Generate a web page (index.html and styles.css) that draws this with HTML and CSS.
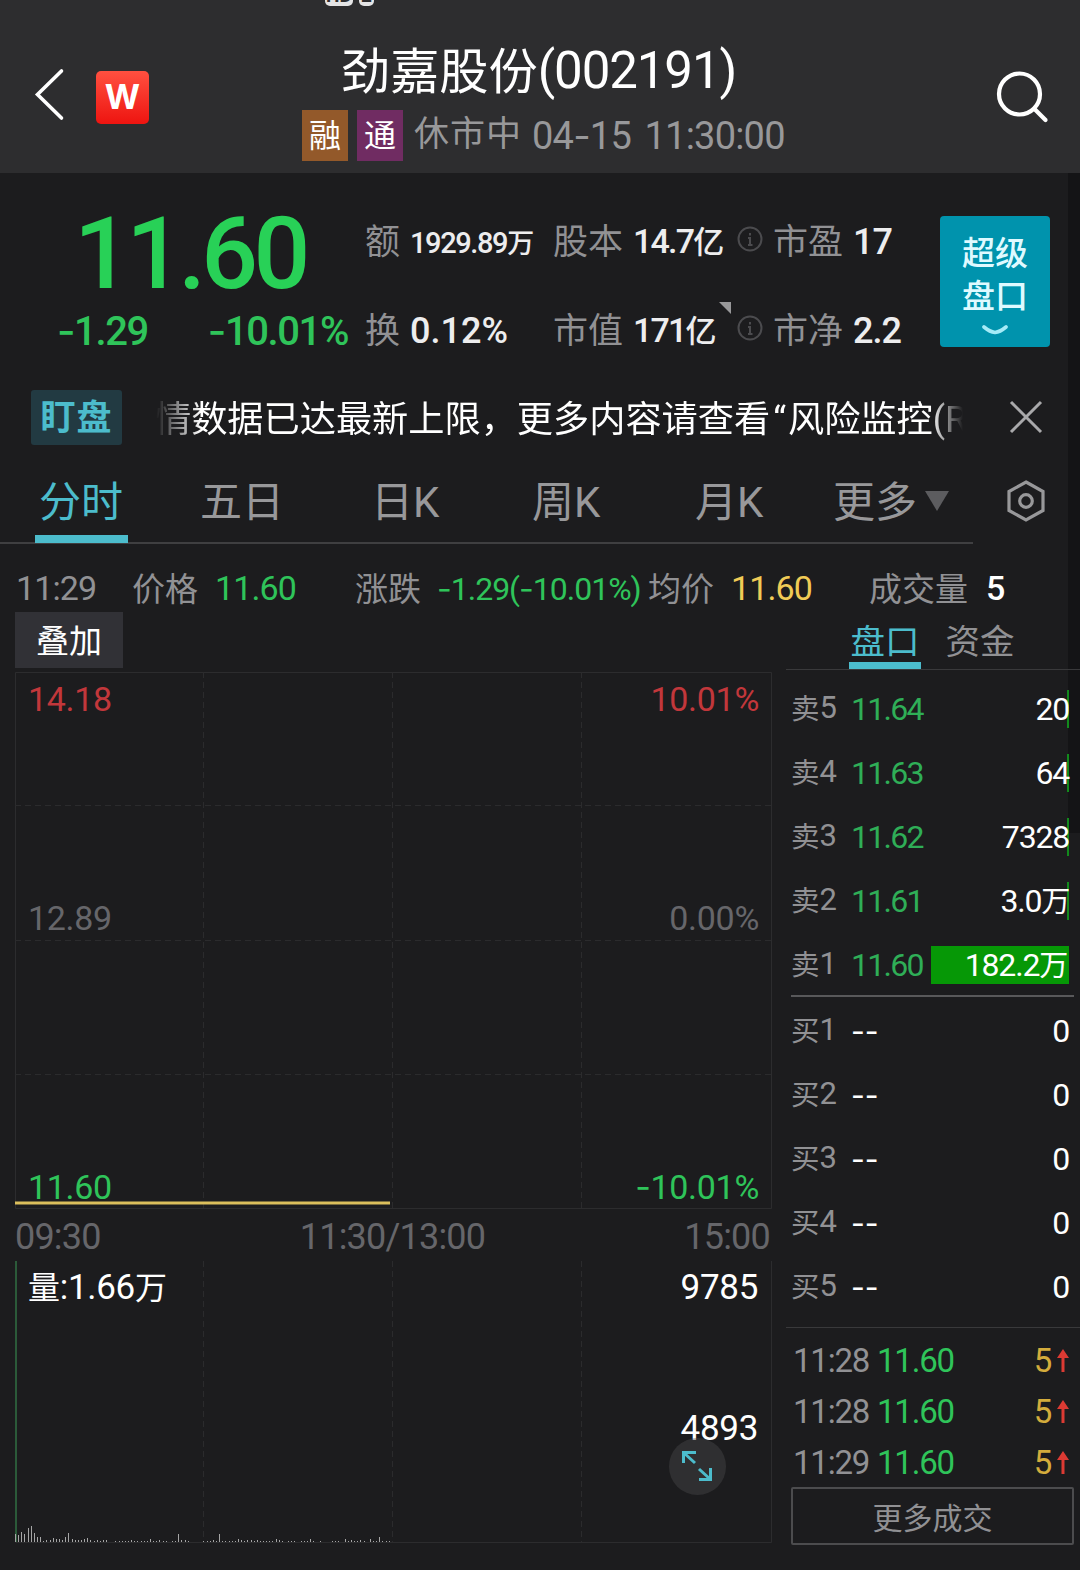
FILE: index.html
```html
<!DOCTYPE html>
<html lang="zh-CN">
<head>
  <meta charset="UTF-8">
  <meta name="viewport" content="width=device-width, initial-scale=1.0">
  <title>劲嘉股份(002191)</title>
  <link rel="stylesheet" href="styles.css">
</head>
<body>
  <!-- Header -->
  <header class="header">
    <div class="status"><span class="sim">HD</span><span class="sim sim-2">2</span></div>
    <div class="header-left">
      <svg class="back" width="32" height="56" viewBox="0 0 32 56"><path d="M27.500 5 L3.500 28.500 L27.500 52" /></svg>
      <div class="logo">W</div>
    </div>
    <div class="header-title">
      <h1><span>劲嘉股份</span><span class="code">(002191)</span></h1>
      <div class="sub">
        <span class="tag tag-rong">融</span>
        <span class="tag tag-tong">通</span>
        <span class="state">休市中</span>
        <span class="clock">04<i>-</i>15 11:30:00</span>
      </div>
    </div>
    <svg class="search" width="56" height="56" viewBox="0 0 56 56"><circle cx="23.500" cy="25" r="20.500" /><path d="M38.500 40 L49.500 51" /></svg>
  </header>

  <!-- Quote summary -->
  <section class="quote">
    <div class="price-box">
      <div class="price">11.60</div>
      <div class="change"><span><i>-</i>1.29</span><span><i>-</i>10.01%</span></div>
    </div>
    <div class="stats">
      <div class="stat"><label>额</label><b class="small">1929.89<em>万</em></b></div>
      <div class="stat"><label>股本</label><b class="mid">14.7<em>亿</em></b></div>
      <div class="stat info">
        <svg width="26" height="26" viewBox="0 0 26 26"><circle cx="13" cy="13" r="11.500" /><path d="M13 7v2.500M11 12h2v7M11 19h4.500" /></svg>
        <label>市盈</label><b>17</b>
      </div>
      <div class="stat"><label>换</label><b class="wide">0.12%</b></div>
      <div class="stat corner"><label>市值</label><b class="mid">171<em>亿</em></b></div>
      <div class="stat info">
        <svg width="26" height="26" viewBox="0 0 26 26"><circle cx="13" cy="13" r="11.500" /><path d="M13 7v2.500M11 12h2v7M11 19h4.500" /></svg>
        <label>市净</label><b>2.2</b>
      </div>
    </div>
    <button class="super">
      <span>超级</span><span>盘口</span>
      <svg width="26" height="12" viewBox="0 0 26 12"><path d="M2 3 Q8 8 13 8.500 Q18 8 24 3" /></svg>
    </button>
  </section>

  <!-- Notice -->
  <section class="notice">
    <span class="notice-tag">盯盘</span>
    <div class="notice-text"><p>情数据已达最新上限，更多内容请查看<q>“</q>风险监控<span>(R</span></p></div>
    <svg width="34" height="34" viewBox="0 0 34 34"><path d="M2 2 L32 32 M32 2 L2 32" /></svg>
  </section>

  <!-- Period tabs -->
  <nav class="tabs">
    <a class="active">分时</a>
    <a>五日</a>
    <a>日<span>K</span></a>
    <a>周<span>K</span></a>
    <a>月<span>K</span></a>
    <a>更多</a>
    <svg class="caret" width="24" height="20" viewBox="0 0 24 20"><path d="M0 0 H24 L12 20 Z" /></svg>
    <svg class="gear" width="40" height="44" viewBox="0 0 40 44"><path d="M20 3 L37 12.500 V31.500 L20 41 L3 31.500 V12.500 Z" /><circle cx="20" cy="22" r="6.300" /></svg>
  </nav>

  <section class="tick">
    <span class="n">11:29</span>
    <span>价格</span>
    <span class="n green">11.60</span>
    <span>涨跌</span>
    <span class="n green chg"><i>-</i>1.29(<i>-</i>10.01%)</span>
    <span>均价</span>
    <span class="n yellow">11.60</span>
    <span>成交量</span>
    <span class="n white">5</span>
  </section>

  <main class="main">
    <div class="charts">
      <button class="overlay-btn">叠加</button>

      <div class="plot price-plot">
        <svg width="757" height="537" viewBox="0 0 757 537">
          <path class="frame" d="M0.500 0.500 H756.500 V536.500 H0.500 Z" />
          <path class="grid" d="M188.500 0V536M377.500 0V536M566.500 0V536M0 133.500H756M0 268.500H756M0 402.500H756" />
          <path class="line" d="M0 531 H375" />
        </svg>
        <div class="scale">
          <div class="red"><span>14.18</span><span>10.01%</span></div>
          <div class="grey"><span>12.89</span><span>0.00%</span></div>
          <div class="green"><span>11.60</span><span><i>-</i>10.01%</span></div>
        </div>
      </div>

      <div class="times"><span>09:30</span><span>11:30/13:00</span><span>15:00</span></div>

      <div class="plot volume-plot">
        <svg width="757" height="282" viewBox="0 0 757 282">
          <path class="frame" d="M756.500 0 V281.500 H0.500" />
          <path class="grid" d="M188.500 0V281M377.500 0V281M566.500 0V281" />
          <path class="first" d="M0.500 0 V281" />
          <path class="bars" id="bars" d="" />
        </svg>
        <div class="vol-labels">
          <div><span><em>量</em>:1.66<em>万</em></span><span>9785</span></div>
          <div><span></span><span>4893</span></div>
        </div>
        <div class="expand">
          <svg width="32" height="32" viewBox="0 0 32 32"><path d="M2.500 13 V2.500 H15 M3 3 L14 13 M29.500 18 V29.500 H18 M29 29 L18 19" /></svg>
        </div>
      </div>
    </div>

    <aside class="book">
      <div class="book-tabs"><a class="active">盘口</a><a>资金</a></div>
      <div class="levels sell">
        <div class="level"><label><em>卖</em>5</label><b>11.64</b><u class="edge">20</u></div>
        <div class="level"><label><em>卖</em>4</label><b>11.63</b><u class="edge">64</u></div>
        <div class="level"><label><em>卖</em>3</label><b>11.62</b><u class="edge">7328</u></div>
        <div class="level"><label><em>卖</em>2</label><b>11.61</b><u class="edge">3.0<em>万</em></u></div>
        <div class="level"><label><em>卖</em>1</label><b>11.60</b><u class="full">182.2<em>万</em></u></div>
      </div>
      <div class="levels buy">
        <div class="level"><label><em>买</em>1</label><b>--</b><u>0</u></div>
        <div class="level"><label><em>买</em>2</label><b>--</b><u>0</u></div>
        <div class="level"><label><em>买</em>3</label><b>--</b><u>0</u></div>
        <div class="level"><label><em>买</em>4</label><b>--</b><u>0</u></div>
        <div class="level"><label><em>买</em>5</label><b>--</b><u>0</u></div>
      </div>
      <div class="trades">
        <div class="trade"><span>11:28</span><b>11.60</b><u>5</u><svg width="12" height="24" viewBox="0 0 12 24"><path d="M6 0 L12 9 H7.500 V23 H4.500 V9 H0 Z" /></svg></div>
        <div class="trade"><span>11:28</span><b>11.60</b><u>5</u><svg width="12" height="24" viewBox="0 0 12 24"><path d="M6 0 L12 9 H7.500 V23 H4.500 V9 H0 Z" /></svg></div>
        <div class="trade"><span>11:29</span><b>11.60</b><u>5</u><svg width="12" height="24" viewBox="0 0 12 24"><path d="M6 0 L12 9 H7.500 V23 H4.500 V9 H0 Z" /></svg></div>
      </div>
      <button class="more">更多成交</button>
    </aside>
  </main>

  <script>
    // volume per minute for the morning session, in pixels
    const volumes = [
      8, 7, 10, 8, 14, 16, 9, 5, 5, 1, 2, 2, 4, 3, 3, 2, 5, 9, 3, 2,
      2, 2, 3, 4, 2, 1, 2, 1, 2, 2, 0, 0, 1, 1, 1, 1, 1, 2, 1, 1,
      1, 1, 1, 3, 1, 1, 2, 1, 1, 0, 1, 1, 8, 2, 2, 1, 0, 0, 0, 0,
      1, 1, 1, 2, 1, 8, 1, 1, 1, 1, 1, 3, 2, 1, 2, 2, 1, 2, 1, 1,
      1, 1, 1, 3, 2, 1, 0, 1, 1, 1, 0, 1, 1, 1, 3, 1, 0, 1, 0, 0,
      0, 1, 1, 1, 0, 3, 1, 2, 1, 1, 2, 1, 0, 3, 1, 1, 5, 1, 1, 1
    ];
    document.getElementById('bars').setAttribute('d',
      volumes.map((v, i) => `M${(0.5 + Math.round(i * 3.14))} 281v-${v}`).join(''));
  </script>
</body>
</html>
```
FILE: styles.css
```css
* {
  box-sizing: border-box;
}

body {
  margin: 0;
  width: 1080px;
  height: 1570px;
  overflow: hidden;
  background: linear-gradient(#141416, #141416) 1068px 173px / 12px 660px no-repeat #1c1c1e;
  font-family: Roboto, "Noto Sans CJK SC", sans-serif;
  color: #fff;
}

svg {
  display: block;
  fill: none;
  flex: none;
}

i, em {
  font-style: normal;
}

/* the wider hyphen used in negative numbers */
i {
  font-family: Inter, sans-serif;
}

u {
  text-decoration: none;
}

b {
  font-weight: 400;
}

button {
  border: none;
  padding: 0;
  color: #fff;
  font-family: inherit;
}

.green { color: #2fc45a; }
.red { color: #c2373b; }
.yellow { color: #f0cb56; }
.grey { color: #66666a; }

/* Header */
.header {
  position: relative;
  display: grid;
  grid-template-columns: 302px 1fr 84px;
  height: 173px;
  background: #2d2d2f;
}

.status {
  position: absolute;
  top: 0;
  left: 325px;
  display: flex;
  gap: 6px;
  height: 6px;
  overflow: hidden;
}

.sim {
  width: 28px;
  height: 22px;
  margin-top: -16px;
  border-radius: 5px;
  background: #e4e4e5;
  color: #2d2d2f;
  font-size: 19px;
  font-weight: 700;
  line-height: 24px;
  text-align: center;
}

.sim-2 {
  width: 15px;
}

.header-left {
  display: flex;
  padding: 66px 0 0 34px;
}

.back path, .search * {
  stroke: #fff;
  stroke-width: 3.6;
  stroke-linecap: round;
}

.search * {
  stroke-width: 4.2;
}

.logo {
  width: 53px;
  height: 53px;
  margin: 5px 0 0 30px;
  border-radius: 5px;
  background: linear-gradient(#ff5040, #ee1410);
  font-family: Inter, sans-serif;
  font-size: 34px;
  font-weight: 700;
  line-height: 52px;
  text-align: center;
}

.header-title h1 {
  display: flex;
  margin: 40px 0 0 39px;
  height: 62px;
  font-size: 49.2px;
  font-weight: 400;
  line-height: 64px;
}

.code {
  font-size: 51px;
  line-height: 62px;
  letter-spacing: -1.1px;
}

.sub {
  display: flex;
  align-items: center;
  height: 52px;
  margin-top: 7px;
  font-size: 35px;
  line-height: 56px;
  color: #98989a;
}

.tag {
  width: 46px;
  height: 51px;
  margin-right: 9px;
  color: #fff;
  font-size: 32px;
  line-height: 53px;
  text-align: center;
}

.tag-rong { background: #93592a; }
.tag-tong { background: #702c62; }

.state {
  margin-left: 2px;
  letter-spacing: 1px;
}

.clock {
  margin-left: 10px;
  font-size: 38px;
  letter-spacing: -0.8px;
  word-spacing: 5px;
}

.search {
  margin-top: 69px;
}

/* Quote summary */
.quote {
  display: grid;
  grid-template-columns: 365px 575px 110px;
  height: 197px;
}

.price {
  height: 92px;
  margin: 34px 0 0 74px;
  color: #28d157;
  font-size: 100px;
  font-weight: 500;
  line-height: 94px;
  letter-spacing: -4.7px;
}

.change {
  display: flex;
  justify-content: space-between;
  margin: 7px 17px 0 57px;
  color: #2fc45a;
  font-size: 40px;
  font-weight: 500;
  line-height: 50px;
  letter-spacing: -1.4px;
}

.stats {
  display: grid;
  grid-template-columns: 188px 184px 1fr;
  grid-template-rows: 89px 89px;
  padding-top: 24px;
}

.stat {
  position: relative;
  display: flex;
  align-items: center;
  height: 89px;
  color: #ededee;
  line-height: 44px;
}

.stat label {
  margin-right: 10px;
  padding-top: 3px;
  color: #919194;
  font-size: 35px;
}

.stat b {
  font-size: 36px;
  font-weight: 500;
  letter-spacing: -1px;
}

.stat .small {
  padding-top: 4px;
  font-size: 29px;
  letter-spacing: -1.4px;
}

.stat .small em {
  font-size: 27px;
}

.stat .mid {
  padding-top: 1px;
  font-size: 34px;
  letter-spacing: -1.8px;
}

.stat .mid em {
  font-size: 31px;
}

.stat .wide {
  letter-spacing: 0;
}

.info svg {
  margin: -6px 10px 0 0;
}

.info svg * {
  stroke: #4b4b4e;
  stroke-width: 2;
}

.corner::after {
  content: "";
  position: absolute;
  top: 16px;
  left: 166px;
  border-top: 12px solid #98989a;
  border-left: 12px solid transparent;
}

.super {
  display: flex;
  flex-direction: column;
  align-items: center;
  height: 131px;
  margin-top: 43px;
  padding-top: 16px;
  border-radius: 4px;
  background: #0093ad;
  color: #dffaff;
  font-size: 33px;
  font-weight: 500;
  line-height: 43px;
}

.super svg {
  margin-top: 6px;
}

.super path {
  stroke: #a5ebf7;
  stroke-width: 3.6;
  stroke-linecap: round;
}

/* Notice */
.notice {
  display: flex;
  align-items: center;
  height: 94px;
  padding-left: 31px;
}

.notice-tag {
  width: 91px;
  height: 55px;
  border-radius: 3px;
  background: #223a42;
  color: #4cbccc;
  font-size: 35px;
  font-weight: 700;
  line-height: 58px;
  letter-spacing: 1px;
  text-align: center;
}

.notice-text {
  width: 807px;
  margin-left: 34px;
  padding-top: 5px;
  overflow: hidden;
  -webkit-mask-image: linear-gradient(to right, transparent, #000 45px, #000 775px, transparent);
  mask-image: linear-gradient(to right, transparent, #000 45px, #000 775px, transparent);
}

.notice-text p {
  margin: 0 0 0 -1px;
  font-size: 36.2px;
  line-height: 50px;
  white-space: nowrap;
}

.notice-text q {
  margin: 0 2px 0 3px;
  quotes: none;
}

.notice > svg {
  margin-left: 46px;
}

.notice > svg path {
  stroke: #a9a9ab;
  stroke-width: 3;
}

/* Period tabs */
.tabs {
  position: relative;
  display: grid;
  grid-template-columns: 161px 171px 161px 163px 138px 96px 81px 40px;
  height: 80px;
  padding-left: 35px;
  background: linear-gradient(#3f3f41, #3f3f41) 0 100% / 973px 2px no-repeat;
  color: #98989a;
  font-size: 42px;
  line-height: 78px;
}

.tabs a {
  padding-left: 4px;
}

.tabs .active {
  width: 93px;
  height: 79px;
  border-bottom: 8px solid #4cbccc;
  color: #4cbccc;
}

.tabs .caret {
  margin-top: 27px;
}

.caret path {
  fill: #5c5c5f;
}

.gear {
  margin-top: 15px;
}

.gear * {
  stroke: #98989a;
  stroke-width: 3.2;
}

/* Values under the cursor */
.tick {
  display: grid;
  grid-template-columns: 116px 83px 140px 82px 211px 83px 138px 117px 30px;
  height: 68px;
  padding-left: 16px;
  color: #919194;
  font-size: 33px;
  line-height: 92px;
  white-space: nowrap;
}

.tick .n {
  font-size: 34px;
  line-height: 89px;
  letter-spacing: -0.9px;
}

.tick .chg {
  font-size: 32px;
  letter-spacing: -1px;
}

.tick .green { color: #2fc45a; }
.tick .yellow { color: #f0cb56; }
.tick .white { color: #fff; font-weight: 500; }

/* Main area */
.main {
  display: grid;
  grid-template-columns: 786px 294px;
}

.charts {
  padding-left: 15px;
}

.overlay-btn {
  display: block;
  width: 108px;
  height: 56px;
  background: #313136;
  font-size: 33px;
  line-height: 60px;
}

.plot {
  position: relative;
  width: 757px;
}

.price-plot {
  margin-top: 4px;
}

.frame {
  stroke: #2c2c2e;
}

.grid {
  stroke: #2b2b2d;
  stroke-dasharray: 6 4;
}

.line {
  stroke: #dcbf5c;
  stroke-width: 3;
}

.scale {
  position: absolute;
  inset: 0;
  display: flex;
  flex-direction: column;
  padding: 6px 13px 0 13px;
  font-size: 34px;
  line-height: 42px;
  letter-spacing: -0.3px;
}

.scale div, .vol-labels div {
  display: flex;
  justify-content: space-between;
}

.scale .grey {
  margin: 177px 0 227px;
}

.times {
  display: flex;
  justify-content: space-between;
  width: 755px;
  height: 52px;
  color: #66666a;
  font-size: 36px;
  line-height: 56px;
  letter-spacing: -0.8px;
}

.first {
  stroke: #2b5a39;
  stroke-width: 3;
}

.bars {
  stroke: #a5a5a5;
}

.vol-labels {
  position: absolute;
  inset: 0;
  padding: 6px 14px 0 13px;
  font-size: 35px;
  line-height: 42px;
  letter-spacing: -0.3px;
}

.vol-labels em {
  font-size: 32px;
}

.vol-labels div + div {
  margin-top: 99px;
}

.expand {
  position: absolute;
  left: 654px;
  top: 177px;
  width: 57px;
  height: 57px;
  padding: 12px;
  border-radius: 50%;
  background: rgba(70, 70, 74, 0.45);
}

.expand path {
  stroke: #4cbccc;
  stroke-width: 3;
}

/* Order book */
.book-tabs {
  display: flex;
  gap: 23px;
  height: 58px;
  padding-left: 63px;
  border-bottom: 1px solid #39393b;
  color: #919194;
  font-size: 34.5px;
  line-height: 60px;
}

.book-tabs a {
  width: 72px;
  height: 57px;
  text-align: center;
}

.book-tabs .active {
  border-bottom: 7px solid #4cbccc;
  color: #4cbccc;
}

.levels {
  margin-left: 5px;
}

.sell {
  width: 283px;
  height: 327px;
  padding-top: 7px;
  border-bottom: 2px solid #58585a;
}

.buy {
  height: 330px;
  padding-top: 2px;
}

.level {
  display: grid;
  grid-template-columns: 60px 80px 138px;
  align-items: center;
  height: 64.1px;
  font-size: 32px;
  line-height: 38px;
}

.level label {
  color: #919194;
  font-size: 31px;
}

.level label em {
  font-size: 28.5px;
  vertical-align: -1px;
}

.sell b {
  color: #2fae57;
  letter-spacing: -1.7px;
}

.buy b {
  font-family: Inter, sans-serif;
  font-size: 30px;
}

.level u {
  height: 38px;
  letter-spacing: -1.2px;
  text-align: right;
}

.level u em {
  font-size: 29px;
}

.level .edge {
  background: linear-gradient(#128a1c, #128a1c) 100% 0 / 2px 38px no-repeat;
}

.level .full {
  padding-right: 2px;
  background: #069806;
}

.trades {
  height: 160px;
  padding: 7px 0 0 7px;
  border-top: 1px solid #39393b;
}

.trade {
  display: grid;
  grid-template-columns: 84px 130px 44px 12px;
  align-items: center;
  height: 51px;
  color: #919194;
  font-size: 33px;
  line-height: 50px;
  letter-spacing: -1.2px;
}

.trade b {
  color: #2fc45a;
}

.trade u {
  color: #d4ac3c;
  text-align: right;
}

.trade svg {
  margin-left: 6px;
}

.trade path {
  fill: #dc3a33;
}

.more {
  display: block;
  width: 283px;
  height: 58px;
  margin-left: 5px;
  border: 2px solid #4c4c4e;
  border-radius: 2px;
  background: none;
  color: #919194;
  font-size: 30px;
}
```
